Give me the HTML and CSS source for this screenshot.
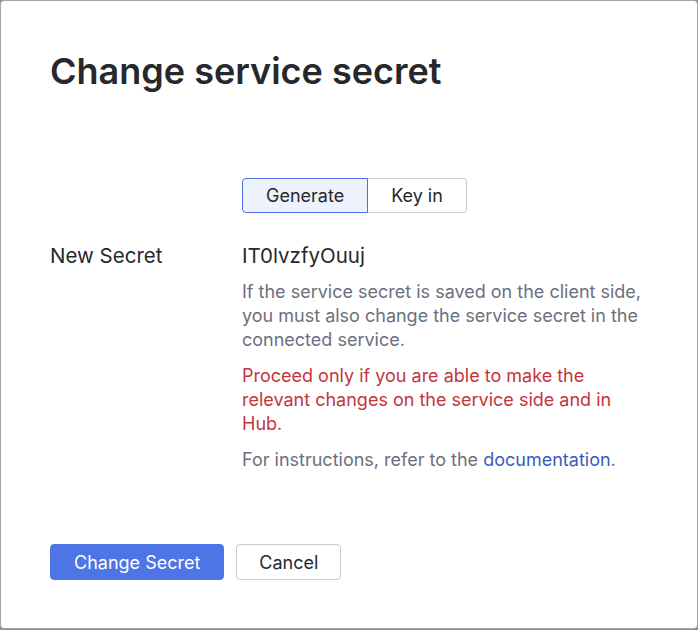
FILE: index.html
```html
<!DOCTYPE html>
<html>
<head>
<meta charset="utf-8">
<link rel="stylesheet" href="styles.css">
</head>
<body>
<div class="dialog">
  <h1 class="title">Change service secret</h1>
  <div class="form">
    <div class="row">
      <div class="label"></div>
      <div class="field">
        <div class="segmented">
          <button class="seg seg-active">Generate</button>
          <button class="seg">Key in</button>
        </div>
      </div>
    </div>
    <div class="row row-secret">
      <div class="label">New Secret</div>
      <div class="field">
        <div class="secret">IT0lvzfyOuuj</div>
        <p class="hint">If the service secret is saved on the client side, you must also change the service secret in the connected service.</p>
        <p class="hint warn">Proceed only if you are able to make the relevant changes on the service side and in Hub.</p>
        <p class="hint">For instructions, refer to the <a class="link" href="#">documentation</a>.</p>
      </div>
    </div>
  </div>
  <div class="actions">
    <button class="btn btn-primary">Change Secret</button>
    <button class="btn btn-secondary">Cancel</button>
  </div>
</div>
</body>
</html>
```
FILE: styles.css
```css
html, body {
  margin: 0;
  padding: 0;
  background: #8f8f8f;
}
body {
  font-family: Inter, "Noto Sans", sans-serif;
  color: #27282c;
  width: 698px;
  height: 630px;
  overflow: hidden;
}
.dialog {
  box-sizing: border-box;
  width: 698px;
  height: 629px;
  background: #fff;
  border: 1px solid #a3a3a3;
  border-radius: 4px;
  padding: 0 49px;
  display: flex;
  flex-direction: column;
}
.title {
  margin: 48px 0 0;
  font-size: 36px;
  font-weight: 600;
  line-height: 44px;
  color: #27282c;
}
.form {
  margin-top: 85px;
  display: flex;
  flex-direction: column;
  gap: 29px;
}
.row {
  display: flex;
}
.label {
  width: 192px;
  flex: none;
  font-size: 20.5px;
  line-height: 28px;
}
.field {
  flex: 1;
  min-width: 0;
}
.segmented {
  display: inline-flex;
}
.seg {
  font-family: inherit;
  font-size: 18px;
  color: #27282c;
  height: 35px;
  background: #fff;
  border: 1px solid #c9cacf;
  padding: 0 23px;
  cursor: pointer;
}
.seg:first-child {
  border-radius: 4px 0 0 4px;
}
.seg:last-child {
  border-radius: 0 4px 4px 0;
  border-left: none;
}
.seg-active {
  background: #eef2fc;
  border-color: #4a72e4;
}
.secret {
  font-size: 20.5px;
  line-height: 28px;
  color: #27282c;
}
.hint {
  margin: 12px 0 0;
  font-size: 18px;
  line-height: 24px;
  color: #6c707e;
}
.secret + .hint {
  margin-top: 10px;
}
.warn {
  color: #c4353d;
}
.link {
  color: #3a5bbf;
  text-decoration: none;
}
.actions {
  margin-top: 72px;
  display: flex;
  gap: 12px;
}
.btn {
  font-family: inherit;
  font-size: 18px;
  height: 36px;
  border-radius: 4px;
  padding: 0 23px;
  cursor: pointer;
}
.btn-primary {
  background: #4d75e6;
  color: #fff;
  border: 1px solid #4d75e6;
}
.btn-secondary {
  background: #fff;
  color: #27282c;
  border: 1px solid #c9cacf;
  padding: 0 22px;
}
```
